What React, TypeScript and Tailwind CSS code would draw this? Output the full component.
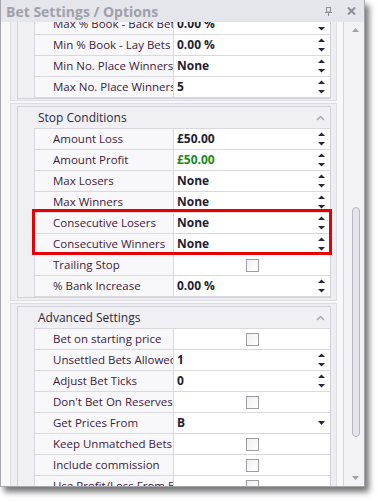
import React from "react";

type Row = {
  label: string;
  value?: string;
  kind: "spin" | "check" | "drop";
  green?: boolean;
};

const topRows: Row[] = [
  { label: "Max % Book - Back Bets", value: "0.00 %", kind: "spin" },
  { label: "Min % Book - Lay Bets", value: "0.00 %", kind: "spin" },
  { label: "Min No. Place Winners", value: "None", kind: "spin" },
  { label: "Max No. Place Winners", value: "5", kind: "spin" },
];

const stopRows: Row[] = [
  { label: "Amount Loss", value: "£50.00", kind: "spin" },
  { label: "Amount Profit", value: "£50.00", kind: "spin", green: true },
  { label: "Max Losers", value: "None", kind: "spin" },
  { label: "Max Winners", value: "None", kind: "spin" },
  { label: "Consecutive Losers", value: "None", kind: "spin" },
  { label: "Consecutive Winners", value: "None", kind: "spin" },
  { label: "Trailing Stop", kind: "check" },
  { label: "% Bank Increase", value: "0.00 %", kind: "spin" },
];

const advancedRows: Row[] = [
  { label: "Bet on starting price", kind: "check" },
  { label: "Unsettled Bets Allowed", value: "1", kind: "spin" },
  { label: "Adjust Bet Ticks", value: "0", kind: "spin" },
  { label: "Don't Bet On Reserves", kind: "check" },
  { label: "Get Prices From", value: "B", kind: "drop" },
  { label: "Keep Unmatched Bets", kind: "check" },
  { label: "Include commission", kind: "check" },
  { label: "Use Profit/Loss From Betfair", kind: "check" },
];

const Spinner = () => (
  <svg width="7" height="14" viewBox="0 0 7 14" className="mr-[5px]">
    <polygon points="0,4 3.5,0.5 7,4" fill="#26263a" />
    <polygon points="0,10 7,10 3.5,13.5" fill="#26263a" />
  </svg>
);

const DropArrow = () => (
  <svg width="7" height="4" viewBox="0 0 7 4" className="mr-[5px]">
    <polygon points="0,0 7,0 3.5,4" fill="#26263a" />
  </svg>
);

const Checkbox = () => (
  <div className="h-[13px] w-[13px] border border-[#9c9ca4] bg-gradient-to-br from-[#f0f0f3] to-white" />
);

const PropRow: React.FC<{ row: Row }> = ({ row }) => (
  <div className="flex h-[21px] border-b border-[#d8d8de]">
    <div className="w-[140px] shrink-0 overflow-hidden whitespace-nowrap border-x border-[#d8d8de] bg-[#f8f8fa] pl-[18px] leading-[20px] text-[#40203f]">
      {row.label}
    </div>
    {row.kind === "check" ? (
      <div className="flex flex-1 items-center justify-center bg-white">
        <Checkbox />
      </div>
    ) : (
      <div className="flex flex-1 items-center justify-between bg-white pl-[3px]">
        <span
          className={
            row.green
              ? "text-[12px] font-bold leading-[20px] text-[#1a8a1a]"
              : "text-[12px] font-bold leading-[20px] text-[#1e1e32]"
          }
        >
          {row.value}
        </span>
        {row.kind === "spin" ? <Spinner /> : <DropArrow />}
      </div>
    )}
  </div>
);

const Section: React.FC<{
  title?: string;
  rows: Row[];
  className?: string;
}> = ({ title, rows, className }) => (
  <div
    className={
      "ml-[9px] w-[327px] border border-[#dcdce2] bg-[#eeeef2] pl-[6px] pr-[5px] " +
      (className ?? "")
    }
  >
    <div className="border border-[#d2d2da] bg-[#f0f0f4]">
      {title && (
        <div className="flex h-[21px] items-center justify-between pl-[20px] text-[12px] text-[#2a2a3a]">
          <span>{title}</span>
          <svg width="9" height="6" viewBox="0 0 9 6" className="mr-[5px]">
            <polyline
              points="1,5 4.5,1.5 8,5"
              fill="none"
              stroke="#a8a8b0"
              strokeWidth="1.5"
            />
          </svg>
        </div>
      )}
      <div className="ml-[16px] border-t border-[#d8d8de]">
        {rows.map((r) => (
          <PropRow key={r.label} row={r} />
        ))}
      </div>
    </div>
  </div>
);

export default function App() {
  return (
    <div
      className="relative h-[501px] w-[377px] overflow-hidden bg-white text-[11.5px]"
      style={{ fontFamily: '"Open Sans", "Noto Sans", sans-serif' }}
    >
      <div className="flex h-[487px] w-[365px] flex-col border-x border-b border-[#a4a4ac] bg-white shadow-[4px_5px_6px_rgba(0,0,0,0.55)]">
        {/* title bar */}
        <div className="flex h-[22px] shrink-0 items-center justify-between bg-[#e5e6eb] pl-[5px]">
          <span className="text-[14px] font-bold text-[#a0a0a8]">
            Bet Settings / Options
          </span>
          <div className="flex items-center">
            <svg width="7" height="9" viewBox="0 0 7 9" className="mr-[15px]">
              <rect x="1.5" y="0.5" width="4" height="4.5" fill="none" stroke="#8e8e96" />
              <line x1="0" y1="5.5" x2="7" y2="5.5" stroke="#8e8e96" />
              <line x1="3.5" y1="5.5" x2="3.5" y2="9" stroke="#8e8e96" />
            </svg>
            <svg width="9" height="8" viewBox="0 0 9 8" className="mr-[8px]">
              <path d="M1 0.5 L8 7.5 M8 0.5 L1 7.5" stroke="#8e8e96" strokeWidth="2" />
            </svg>
          </div>
        </div>

        {/* body */}
        <div className="flex flex-1 overflow-hidden">
          <div className="w-[342px] overflow-hidden bg-[#f8f8fa]">
            <Section rows={topRows} className="-mt-[10px] mb-[2px] border-t-0 pb-[1px]" />
            <Section title="Stop Conditions" rows={stopRows} className="mb-[2px] py-[2px]" />
            <Section title="Advanced Settings" rows={advancedRows} className="py-[2px]" />
          </div>

          {/* scrollbar */}
          <div className="flex w-[21px] flex-col border-l border-[#d4d4dc] bg-[#f3f3f6] pl-[8px]">
            <svg width="7" height="4" viewBox="0 0 7 4" className="mt-[6px]">
              <polygon points="0,4 3.5,0 7,4" fill="#a0a0a8" />
            </svg>
            <div className="mt-[175px] h-[230px] w-[8px] rounded-full border border-[#b8b8c2] bg-[#e4e4ea]" />
            <svg width="7" height="4" viewBox="0 0 7 4" className="mt-[39px]">
              <polygon points="0,0 7,0 3.5,4" fill="#a0a0a8" />
            </svg>
          </div>
        </div>
      </div>

      {/* highlight annotation */}
      <div className="absolute left-[32px] top-[209px] h-[46px] w-[300px] border-[3px] border-[#e60000]" />
    </div>
  );
}
